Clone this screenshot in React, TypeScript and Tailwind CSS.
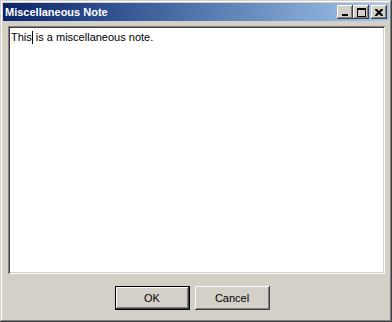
const font = { fontFamily: '"Liberation Sans", Arial, sans-serif' };

function CaptionButton({ children, className = "" }: { children: React.ReactNode; className?: string }) {
  return (
    <div
      className={`w-[16px] h-[14px] bg-[#d4d0c8] flex items-center justify-center shadow-[inset_-1px_-1px_#404040,inset_1px_1px_#ffffff,inset_-2px_-2px_#808080] ${className}`}
    >
      {children}
    </div>
  );
}

function Button({ label, isDefault }: { label: string; isDefault?: boolean }) {
  return (
    <div
      className={`w-[75px] h-[24px] bg-[#d4d0c8] flex items-center justify-center text-[11px] text-black ${
        isDefault
          ? "shadow-[inset_0_0_0_1px_#000000,inset_-2px_-2px_#404040,inset_2px_2px_#ffffff,inset_-3px_-3px_#808080]"
          : "shadow-[inset_-1px_-1px_#404040,inset_1px_1px_#ffffff,inset_-2px_-2px_#808080]"
      }`}
    >
      {label}
    </div>
  );
}

export default function App() {
  return (
    <div
      style={font}
      className="w-[392px] h-[322px] bg-[#d4d0c8] p-[3px] flex flex-col shadow-[inset_-1px_-1px_#404040,inset_1px_1px_#d4d0c8,inset_-2px_-2px_#808080,inset_2px_2px_#ffffff]"
    >
      {/* Title bar */}
      <div className="h-[18px] flex items-center justify-between bg-gradient-to-r from-[#0a246a] to-[#a6caf0] pl-[2px] pr-[2px]">
        <span className="text-white font-bold text-[11px] leading-none">Miscellaneous Note</span>
        <div className="flex items-center">
          <CaptionButton>
            <svg width="8" height="7" viewBox="0 0 8 7">
              <rect x="1" y="5" width="6" height="2" fill="#000" />
            </svg>
          </CaptionButton>
          <CaptionButton>
            <svg width="9" height="9" viewBox="0 0 9 9">
              <path d="M0 0h9v9H0z M1 2v6h7V2z" fill="#000" fillRule="evenodd" />
            </svg>
          </CaptionButton>
          <CaptionButton className="ml-[2px]">
            <svg width="8" height="7" viewBox="0 0 8 7">
              <path
                d="M0 0h2l2 2 2-2h2v1L5.5 3.5 8 6v1H6L4 5 2 7H0V6l2.5-2.5L0 1z"
                fill="#000"
              />
            </svg>
          </CaptionButton>
        </div>
      </div>

      {/* Edit area */}
      <div className="flex-1 mt-[5px] ml-[5px] mr-[4px] bg-white p-[2px] shadow-[inset_1px_1px_#808080,inset_-1px_-1px_#ffffff,inset_2px_2px_#404040,inset_-2px_-2px_#d4d0c8]">
        <div className="pl-[1px] pt-[3px] text-[11px] leading-[13px] text-black">
          This<span className="inline-block w-[1px] h-[13px] bg-black align-top" />
          {" "}is a miscellaneous note.
        </div>
      </div>

      {/* Buttons */}
      <div className="mt-[12px] mb-[9px] flex justify-center gap-[5px] pr-[8px]">
        <Button label="OK" isDefault />
        <Button label="Cancel" />
      </div>
    </div>
  );
}
